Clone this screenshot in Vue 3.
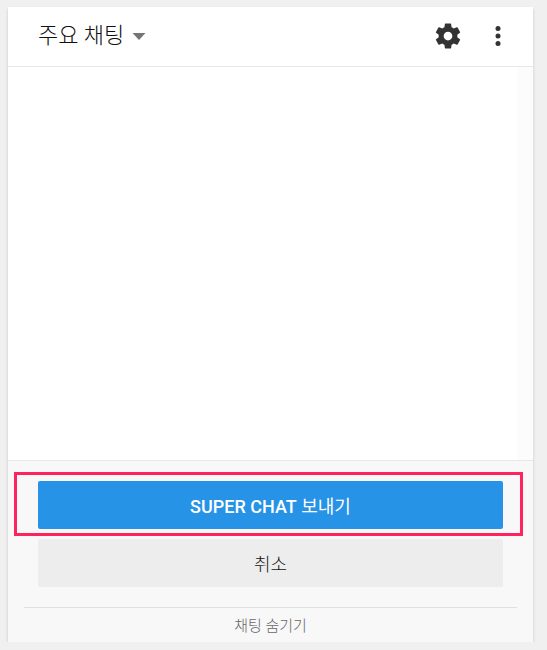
<template>
  <main class="chat-panel">
    <!-- Header -->
    <header class="chat-header">
      <button type="button" class="view-selector" aria-haspopup="listbox">
        <span>주요 채팅</span>
        <svg class="caret" viewBox="0 0 14 8" aria-hidden="true">
          <path d="M0.5 1h13L7 8z" />
        </svg>
      </button>
      <div class="header-actions">
        <button type="button" class="icon-button" aria-label="설정">
          <svg viewBox="0 0 24 24" aria-hidden="true">
            <path
              d="M19.43 12.98c.04-.32.07-.64.07-.98s-.03-.66-.07-.98l2.11-1.65c.19-.15.24-.42.12-.64l-2-3.46c-.12-.22-.39-.3-.61-.22l-2.49 1c-.52-.4-1.08-.73-1.69-.98l-.38-2.65C14.46 2.18 14.25 2 14 2h-4c-.25 0-.46.18-.49.42l-.38 2.65c-.61.25-1.17.59-1.69.98l-2.49-1c-.23-.09-.49 0-.61.22l-2 3.46c-.13.22-.07.49.12.64l2.11 1.65c-.04.32-.07.65-.07.98s.03.66.07.98l-2.11 1.65c-.19.15-.24.42-.12.64l2 3.46c.12.22.39.3.61.22l2.49-1c.52.4 1.08.73 1.69.98l.38 2.65c.03.24.24.42.49.42h4c.25 0 .46-.18.49-.42l.38-2.65c.61-.25 1.17-.59 1.69-.98l2.49 1c.23.09.49 0 .61-.22l2-3.46c.12-.22.07-.49-.12-.64l-2.11-1.65zM12 15.5c-1.93 0-3.5-1.57-3.5-3.5s1.57-3.5 3.5-3.5 3.5 1.57 3.5 3.5-1.57 3.5-3.5 3.5z"
            />
          </svg>
        </button>
        <button type="button" class="icon-button" aria-label="더보기">
          <svg viewBox="0 0 24 24" aria-hidden="true">
            <circle cx="12" cy="6" r="2" />
            <circle cx="12" cy="12" r="2" />
            <circle cx="12" cy="18" r="2" />
          </svg>
        </button>
      </div>
    </header>

    <!-- Messages -->
    <section class="chat-feed">
      <div class="scroll-track"></div>
    </section>

    <!-- Purchase actions -->
    <footer class="chat-footer">
      <div class="highlight">
        <button type="button" class="action primary"><strong>SUPER CHAT</strong> 보내기</button>
      </div>
      <div class="cancel-row">
        <button type="button" class="action">취소</button>
      </div>
      <div class="hide-row">
        <button type="button" class="hide-button">채팅 숨기기</button>
      </div>
    </footer>
  </main>
</template>

<script setup>
</script>

<style>
body {
  margin: 0;
  background-color: #f0f0f0;
}
</style>

<style scoped>
.chat-panel {
  box-sizing: border-box;
  display: flex;
  flex-direction: column;
  min-height: calc(100vh - 15px);
  margin: 7px 14px 0 8px;
  background-color: #ffffff;
  box-shadow: 0 2px 3px rgba(0, 0, 0, 0.16);
  font-family: Roboto, 'Noto Sans CJK KR', sans-serif;
}

button {
  margin: 0;
  padding: 0;
  border: none;
  background: none;
  font-family: inherit;
  cursor: pointer;
}

/* Header */
.chat-header {
  box-sizing: border-box;
  display: flex;
  justify-content: space-between;
  align-items: center;
  height: 60px;
  padding: 0 20px 2px 30px;
  border-bottom: 1px solid #e8e8e8;
}
.view-selector {
  display: flex;
  align-items: center;
  gap: 8px;
  color: #111111;
  font-size: 22px;
  font-weight: 300;
  line-height: 28px;
}
.caret {
  width: 14px;
  height: 8px;
  fill: #757575;
}
.header-actions {
  display: flex;
  gap: 20px;
}
.icon-button {
  width: 30px;
  height: 30px;
}
.icon-button svg {
  display: block;
  width: 30px;
  height: 30px;
  fill: #333333;
}

/* Messages */
.chat-feed {
  display: flex;
  flex: 1;
  justify-content: flex-end;
}
.scroll-track {
  width: 16px;
  background-color: #fcfcfc;
}

/* Footer */
.chat-footer {
  padding-top: 11px;
  border-top: 1px solid #e8e8e8;
  background-color: #f8f8f8;
}
.highlight {
  margin: 0 10px 0 6px;
  padding: 6px 17px 4px 21px;
  border: 3px solid #ff225f;
}
.cancel-row {
  padding: 3px 30px 20px;
}
.action {
  display: block;
  width: 100%;
  height: 48px;
  border-radius: 2px;
  background-color: #ededed;
  color: #111111;
  font-size: 18px;
  font-weight: 300;
}
.action.primary {
  background-color: #2793e6;
  color: #ffffff;
  font-weight: 400;
}
.action strong {
  font-weight: 500;
}
.hide-row {
  margin: 0 16px;
  border-top: 1px solid #e0e0e0;
}
.hide-button {
  display: block;
  width: 100%;
  height: 34px;
  padding-bottom: 2px;
  color: #666666;
  font-size: 15px;
  font-weight: 300;
}
</style>
